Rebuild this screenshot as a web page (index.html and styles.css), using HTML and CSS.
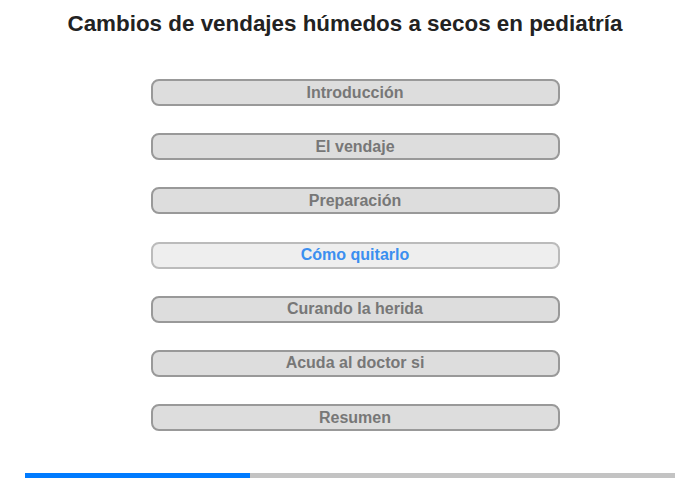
FILE: index.html
```html
<!DOCTYPE html>
<html lang="es">
<head>
  <meta charset="UTF-8">
  <meta name="viewport" content="width=device-width, initial-scale=1.0">
  <title>Cambios de vendajes</title>
  <link rel="stylesheet" href="styles.css">
</head>
<body>

  <div class="page">
    <h1>Cambios de vendajes húmedos a secos en pediatría</h1>

    <div class="menu">
      <button class="menu-item">Introducción</button>
      <button class="menu-item">El vendaje</button>
      <button class="menu-item">Preparación</button>
      <button class="menu-item active">Cómo quitarlo</button>
      <button class="menu-item">Curando la herida</button>
      <button class="menu-item">Acuda al doctor si</button>
      <button class="menu-item">Resumen</button>
    </div>

    <div class="progress">
      <div class="progress-bar" style="width: 34.6%"></div>
    </div>
  </div>

</body>
</html>
```

FILE: styles.css
```css
body {
  font-family: "Liberation Sans", Arial, sans-serif;
  margin: 0;
  padding: 0;
  background-color: #fff;
}
.page {
  width: 700px;
  height: 480px;
}
h1 {
  margin: 0;
  padding: 11px 10px 0 0;
  font-size: 22.4px;
  line-height: 25px;
  color: #222;
  text-align: center;
}
.menu {
  display: flex;
  flex-direction: column;
  align-items: center;
  gap: 27.2px;
  margin-top: 43px;
  padding-left: 10px;
}
.menu-item {
  width: 409px;
  height: 27px;
  padding: 0;
  font-family: inherit;
  font-size: 16px;
  font-weight: bold;
  color: #777;
  background: #ddd;
  border: 2px solid #999;
  border-radius: 8px;
  cursor: pointer;
}
.menu-item.active {
  color: #3b8ff0;
  background: #eee;
  border-color: #bbb;
}
.progress {
  margin: 42px 25px 0 25px;
  height: 5px;
  background: #c3c3c3;
}
.progress-bar {
  height: 100%;
  background: #007bff;
}
```
